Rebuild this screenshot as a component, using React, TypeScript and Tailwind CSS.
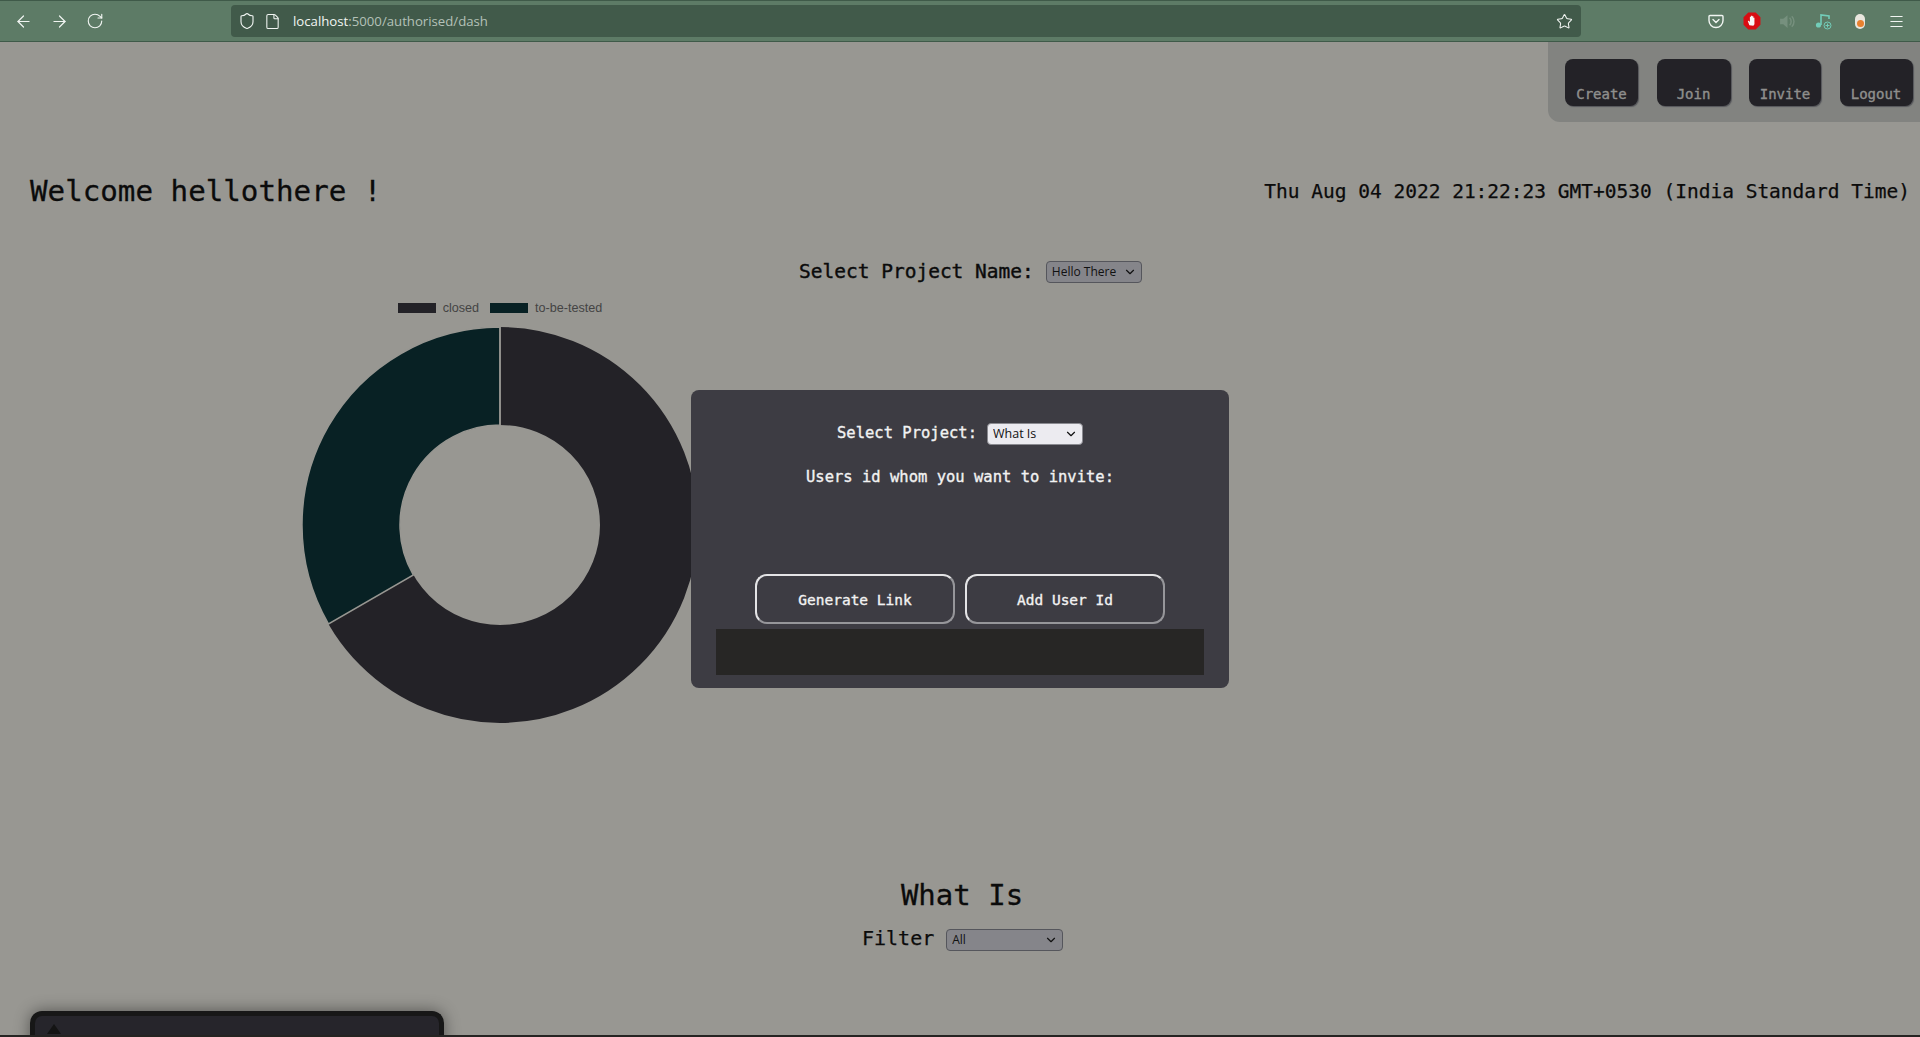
import { ArrowLeft, ArrowRight, RotateCw, Shield, File, Star, Menu, ChevronDown } from "lucide-react";

const mono = "font-['DejaVu_Sans_Mono','Liberation_Mono',monospace]";

const navButtons = [
  { label: "Create", width: "w-[73px]" },
  { label: "Join", width: "w-[74px]" },
  { label: "Invite", width: "w-[72px]" },
  { label: "Logout", width: "w-[73px]" },
];

function Select({ value, className, wrap = "" }: { value: string; className: string; wrap?: string }) {
  return (
    <span className={`${wrap} relative inline-block ml-3 [-webkit-text-stroke:0]`}>
      <select
        className={`${className} block appearance-none h-[22px] rounded pl-[5px] border font-['Open_Sans',sans-serif] font-normal text-[#111]`}
      >
        <option>{value}</option>
      </select>
      <ChevronDown size={14} strokeWidth={2} className="absolute right-[5px] top-[4px] text-[#111] pointer-events-none" />
    </span>
  );
}

function BrowserBar() {
  return (
    <header className="h-[42px] flex items-center border-y border-[#3f5a49] bg-[#5d7b66] text-[#f1f5f2]">
      <div className="w-[231px] pl-[14px] flex items-center gap-[17px]">
        <ArrowLeft size={19} strokeWidth={1.5} />
        <ArrowRight size={19} strokeWidth={1.5} />
        <RotateCw size={18} strokeWidth={1.5} />
      </div>
      <div className="w-[1350px] h-8 rounded bg-[#415a4a] flex items-center pl-[7px] pr-2 text-[13.2px] font-['Open_Sans',sans-serif]">
        <Shield size={18} strokeWidth={1.5} />
        <File size={17} strokeWidth={1.5} className="ml-[8px]" />
        <span className="ml-[12px] pt-[2px]">localhost</span>
        <span className="pt-[2px] text-[#b4c1b8]">:5000/authorised/dash</span>
        <Star size={17} strokeWidth={1.5} className="ml-auto" />
      </div>
      <div className="flex-1 relative h-full flex items-center">
        {/* extensions */}
        <svg width="16" height="16" viewBox="0 0 16 16" className="ml-[127px]" fill="none" stroke="#f1f5f2" strokeWidth="1.4">
          <path d="M2 2.5h12a1 1 0 0 1 1 1v4a7 7 0 0 1-14 0v-4a1 1 0 0 1 1-1z" />
          <path d="M5 6.5l3 3 3-3" strokeLinecap="round" />
        </svg>
        <svg width="18" height="18" viewBox="0 0 17 17" className="ml-[19px]">
          <path d="M5 0.5h7L16.5 5v7L12 16.5H5L0.5 12V5z" fill="#d80d12" />
          <path d="M6 12.5L4.5 8.5l1 -.3L6.5 9.5V4.5h1v3V3.5h1.2v4-3.5h1.1v4-2.5h1v6l-1 1.5z" fill="#f7f7f7" />
        </svg>
        <svg width="17" height="17" viewBox="0 0 16 16" className="ml-[18px]" fill="#76907e">
          <path d="M1 5.5h3L8 2v12L4 10.5H1z" />
          <path d="M10 4.5a5 5 0 0 1 0 7M12 3a7 7 0 0 1 0 10" fill="none" stroke="#76907e" strokeWidth="1.4" />
        </svg>
        <svg width="17" height="17" viewBox="0 0 17 17" className="ml-[19px]" fill="none">
          <circle cx="3.5" cy="12" r="2.6" fill="#72cdb9" />
          <path d="M6 12V2l8 1v3" stroke="#72cdb9" strokeWidth="1.6" />
          <circle cx="12.5" cy="12.5" r="3.5" stroke="#72cdb9" strokeWidth="1" />
          <path d="M12.5 10.5v4M10.5 12.5h4" stroke="#72cdb9" strokeWidth="1" />
        </svg>
        <span className="ml-[23px] w-[10px] h-[15px] rounded-full bg-[#e9e6de] flex items-end justify-center pb-[2px]">
          <span className="w-[7px] h-[7px] rounded-full bg-[#e9812f]" />
        </span>
        <Menu size={17} strokeWidth={1.5} className="ml-[23px]" />
      </div>
    </header>
  );
}

function Donut() {
  return (
    <svg width="400" height="400" viewBox="0 0 400 400" className="block">
      <circle cx="200" cy="200" r="149" fill="none" stroke="#232227" strokeWidth="98" />
      <path d="M200 2A198 198 0 0 0 28.5 299L113.4 250A100 100 0 0 1 200 100Z" fill="#082124" stroke="#989792" strokeWidth="1.5" />
      <path d="M200 2V100" stroke="#989792" strokeWidth="1.5" />
    </svg>
  );
}

export default function App() {
  return (
    <div className={`relative h-[1037px] overflow-hidden bg-[#989792] text-[#0b0b0b] ${mono}`}>
      <BrowserBar />

      <div className="flex justify-end">
        <nav className="h-[80px] w-[372px] rounded-bl-xl bg-[#828380] pt-[17px] pl-[17px] flex gap-[18.5px]">
          {navButtons.map((b) => (
            <button
              key={b.label}
              className={`${b.width} h-[47px] rounded-lg bg-[#232227] text-[#8f8f8d] text-[14px] [-webkit-text-stroke:0.4px] flex items-end justify-center pb-[1px] shadow-[1px_1px_1px_#55565a]`}
            >
              {b.label}
            </button>
          ))}
        </nav>
      </div>

      <div className="mt-[50px] flex items-center justify-between pl-[30px] pr-[10px] h-[40px]">
        <h1 className="text-[29.2px] [-webkit-text-stroke:0.3px]">Welcome hellothere !</h1>
        <p className="text-[19.5px] [-webkit-text-stroke:0.25px]">Thu Aug 04 2022 21:22:23 GMT+0530 (India Standard Time)</p>
      </div>

      <div className="mt-[40px] pl-[799px] flex items-center h-[40px] text-[19.5px] [-webkit-text-stroke:0.4px]">
        <span>Select Project Name:</span>
        <Select value="Hello There" className="w-[96px] border-[#55565c] bg-[#85858a] text-[12px]" />
      </div>

      <div className="ml-[300px] w-[400px]">
        <div className="mt-[7px] flex items-center justify-center gap-[11px] h-[18px] text-[12.6px] text-[#444444] font-['Liberation_Sans',sans-serif]">
          <span className="flex items-center gap-[7px]">
            <span className="w-[38px] h-[10px] bg-[#232227]" />
            closed
          </span>
          <span className="flex items-center gap-[7px]">
            <span className="w-[38px] h-[10px] bg-[#082124]" />
            to-be-tested
          </span>
        </div>
        <div className="mt-[8px]">
          <Donut />
        </div>
      </div>

      <h2 className="mt-[150px] text-center text-[29px] leading-[40px] pl-[4px] [-webkit-text-stroke:0.3px]">What Is</h2>
      <div className="flex items-center h-[40px] pl-[862px] mt-[3px] text-[20px] [-webkit-text-stroke:0.25px]">
        <span>Filter</span>
        <Select value="All" wrap="mt-[3px]" className="w-[117px] border-[#55565c] bg-[#85858a] text-[12px]" />
      </div>

      <div className="ml-[30px] mt-[53px] w-[414px] h-[40px] rounded-t-xl border-[5px] border-b-0 border-[#171717] bg-[#26252b] shadow-[0_0_16px_rgba(0,0,0,0.45)] pl-[12px] pt-[8px]">
        <div className="w-0 h-0 border-x-[7px] border-b-[10px] border-x-transparent border-b-[#141414]" />
      </div>
      <div className="absolute bottom-0 left-0 right-0 h-[2px] bg-[#252422]" />

      {/* invite modal */}
      <div className="absolute left-[691px] top-[390px] w-[538px] h-[298px] rounded-lg bg-[#3d3c43] text-[#f2f2f2] px-[25px] pt-[32px]">
        <div className="flex items-center justify-center h-[24px] text-[15.5px] [-webkit-text-stroke:0.35px]">
          <span>Select Project:</span>
          <Select value="What Is" className="w-[96px] border-[#8a8a90] bg-[#ecebf0] text-[12.5px] -ml-[2px]" />
        </div>
        <p className="mt-[19px] text-center text-[15.5px] [-webkit-text-stroke:0.35px] leading-[24px]">Users id whom you want to invite:</p>
        <div className="mt-[85px] flex justify-center gap-[10px]">
          <button className="w-[200px] h-[50px] pt-[3px] rounded-xl border-2 border-[#e4e4e6] border-r-[#96969a] border-b-[#96969a] text-[14.5px] [-webkit-text-stroke:0.35px]">Generate Link</button>
          <button className="w-[200px] h-[50px] pt-[3px] rounded-xl border-2 border-[#e4e4e6] border-r-[#96969a] border-b-[#96969a] text-[14.5px] [-webkit-text-stroke:0.35px]">Add User Id</button>
        </div>
        <div className="mt-[5px] h-[46px] bg-[#272625]" />
      </div>
    </div>
  );
}
